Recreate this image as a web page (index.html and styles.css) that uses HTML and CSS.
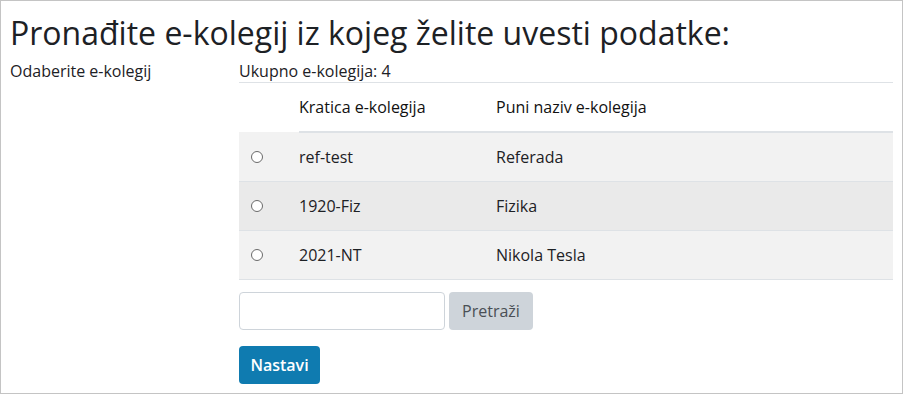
FILE: index.html
```html
<!DOCTYPE html>
<html lang="hr">
<head>
<meta charset="utf-8">
<link rel="stylesheet" href="styles.css">
</head>
<body>
<div class="frame">
  <h2 class="title">Pronađite e-kolegij iz kojeg želite uvesti podatke:</h2>
  <div class="form-row">
    <div class="label">Odaberite e-kolegij</div>
    <div class="field">
      <div class="total">Ukupno e-kolegija: 4</div>
      <table class="courses">
        <thead>
          <tr><th class="c-radio"></th><th class="c-short">Kratica e-kolegija</th><th>Puni naziv e-kolegija</th></tr>
        </thead>
        <tbody>
          <tr class="odd"><td class="c-radio"><span class="radio"></span></td><td>ref-test</td><td>Referada</td></tr>
          <tr class="even"><td class="c-radio"><span class="radio"></span></td><td>1920-Fiz</td><td>Fizika</td></tr>
          <tr class="odd"><td class="c-radio"><span class="radio"></span></td><td>2021-NT</td><td>Nikola Tesla</td></tr>
        </tbody>
      </table>
      <div class="search">
        <input class="search-input" type="text">
        <button class="btn btn-secondary">Pretraži</button>
      </div>
      <button class="btn btn-primary">Nastavi</button>
    </div>
  </div>
</div>
</body>
</html>
```
FILE: styles.css
```css
html, body { margin: 0; padding: 0; background: #fff; }
body { font-family: "Open Sans", "Noto Sans", sans-serif; color: #1d2125; font-size: 16px; }
.frame {
  box-sizing: border-box;
  width: 903px;
  height: 394px;
  border: 1px solid #c4c4c4;
  padding: 0 9px 0 9px;
  overflow: hidden;
}
.title {
  margin: 11px 0 0 0;
  font-size: 32px;
  font-weight: 400;
  line-height: 42px;
  color: #1d2125;
}
.form-row { display: flex; margin-top: 6px; }
.label { width: 229px; line-height: 22px; color: #1d2125; }
.field { flex: 1; }
.total { line-height: 22px; padding-bottom: 0; border-bottom: 1px solid #dee2e6; }
.courses { width: 100%; border-collapse: collapse; }
.courses th { text-align: left; font-weight: 400; height: 48px; padding: 0; border-bottom: 2px solid #dee2e6; color: #111; }
.courses th.c-radio { border-bottom: none; }
.courses td { height: 48px; padding: 0; border-bottom: 1px solid #dee2e6; }
.c-radio { width: 60px; }
.c-short { width: 197px; }
.odd { background: #f2f2f2; }
.even { background: #eaeaea; }
.radio {
  display: block;
  width: 10px; height: 10px;
  border: 1px solid #6a6a6a;
  border-radius: 50%;
  background: #fff;
  margin-left: 12px;
}
.search { display: flex; gap: 4px; margin-top: 12px; }
.search-input {
  box-sizing: border-box;
  width: 206px; height: 38px;
  border: 1px solid #ced4da;
  border-radius: 4px;
  margin: 0;
}
.btn {
  box-sizing: border-box;
  height: 38px;
  border: none;
  border-radius: 4px;
  font-family: inherit;
  font-size: 16px;
  padding: 0;
  margin: 0;
}
.btn-secondary { background: #ced4da; color: #4a4f55; width: 84px; }
.btn-primary { background: #0f7bb0; color: #fff; width: 81px; margin-top: 16px; display: block; font-weight: 600; }
```
